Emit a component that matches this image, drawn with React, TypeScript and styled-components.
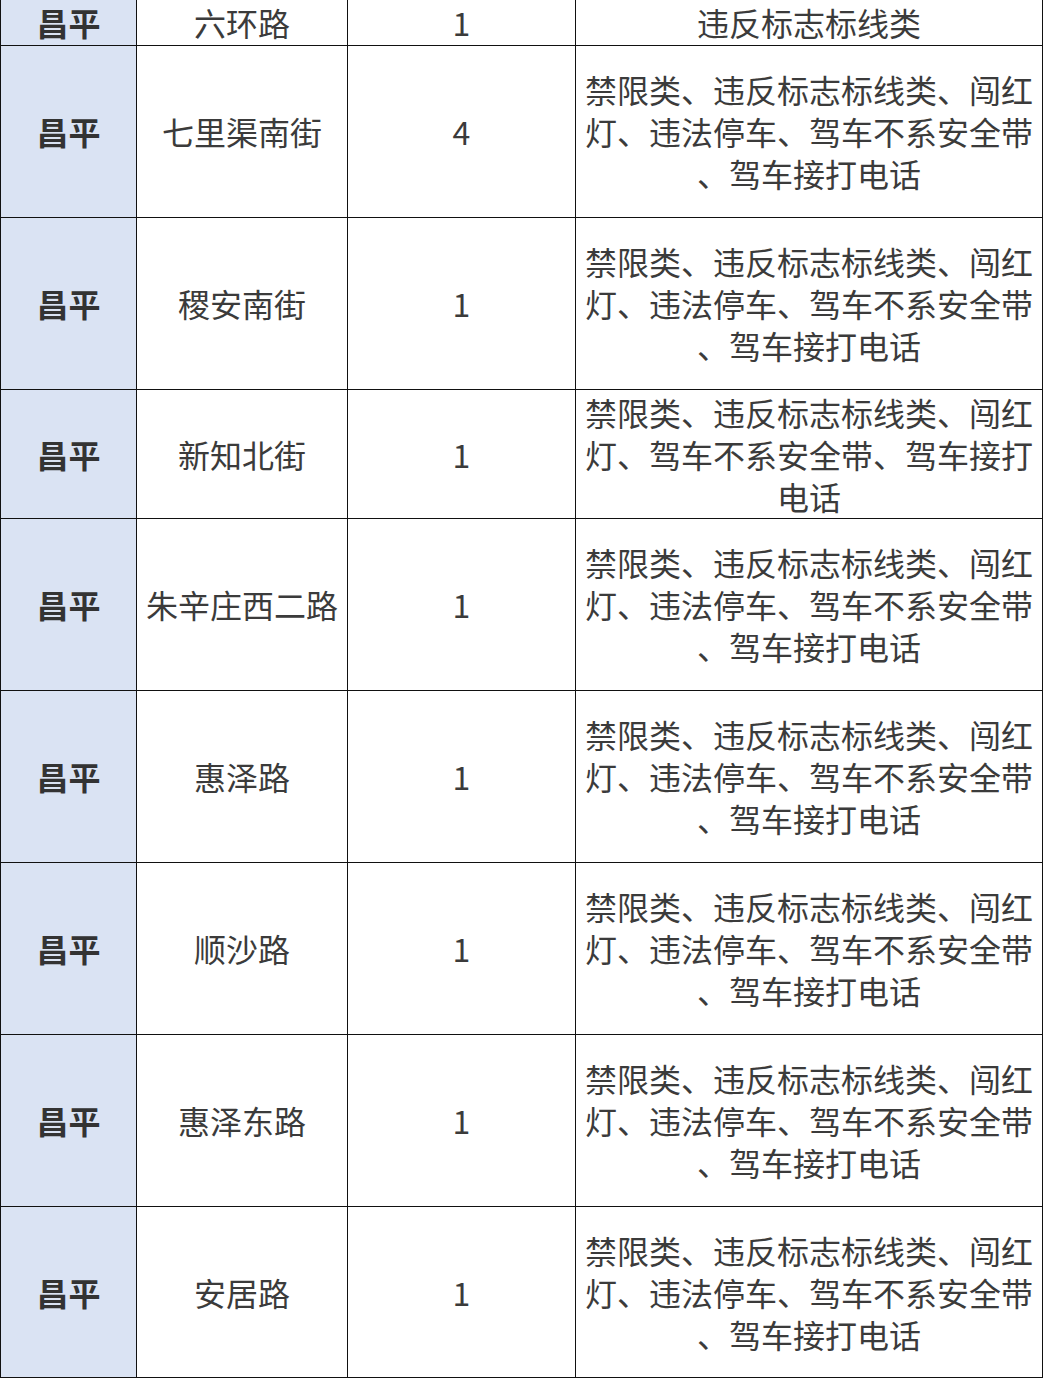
import styled, { createGlobalStyle } from "styled-components";

const GlobalStyle = createGlobalStyle`
  html, body {
    margin: 0;
    padding: 0;
    background: #ffffff;
  }
  body {
    font-family: "Noto Sans CJK SC", "Noto Sans", sans-serif;
  }
`;

const Table = styled.table`
  width: 1042px;
  border-collapse: collapse;
  table-layout: fixed;
  color: #3b3b3b;
  font-size: 32px;
  line-height: 42px;
`;

const Col = styled.col<{ $w: number }>`
  width: ${(p) => p.$w}px;
`;

const Row = styled.tr<{ $h: number }>`
  height: ${(p) => p.$h}px;
`;

const Cell = styled.td<{ $top?: boolean }>`
  border: 1.5px solid #111111;
  border-top: ${(p) => (p.$top ? "none" : "1.5px solid #111111")};
  text-align: center;
  vertical-align: middle;
  padding: 0 4px;
  overflow: hidden;
`;

const AreaCell = styled(Cell)`
  background: #dae3f3;
  font-weight: bold;
  color: #333333;
`;

const DescCell = styled(Cell)`
  line-break: anywhere;
  padding: 0 2px;
`;

const full = "禁限类、违反标志标线类、闯红灯、违法停车、驾车不系安全带、驾车接打电话";

const rows = [
  { road: "六环路", count: "1", desc: "违反标志标线类", h: 45 },
  { road: "七里渠南街", count: "4", desc: full, h: 172 },
  { road: "稷安南街", count: "1", desc: full, h: 172 },
  { road: "新知北街", count: "1", desc: "禁限类、违反标志标线类、闯红灯、驾车不系安全带、驾车接打电话", h: 129 },
  { road: "朱辛庄西二路", count: "1", desc: full, h: 172 },
  { road: "惠泽路", count: "1", desc: full, h: 172 },
  { road: "顺沙路", count: "1", desc: full, h: 172 },
  { road: "惠泽东路", count: "1", desc: full, h: 172 },
  { road: "安居路", count: "1", desc: full, h: 171 },
];

export default function App() {
  return (
    <>
      <GlobalStyle />
      <Table>
        <colgroup>
          <Col $w={136} />
          <Col $w={211} />
          <Col $w={228} />
          <Col $w={467} />
        </colgroup>
        <tbody>
          {rows.map((r, i) => (
            <Row key={i} $h={r.h}>
              <AreaCell $top={i === 0}>昌平</AreaCell>
              <Cell $top={i === 0}>{r.road}</Cell>
              <Cell $top={i === 0}>{r.count}</Cell>
              <DescCell $top={i === 0}>{r.desc}</DescCell>
            </Row>
          ))}
        </tbody>
      </Table>
    </>
  );
}
